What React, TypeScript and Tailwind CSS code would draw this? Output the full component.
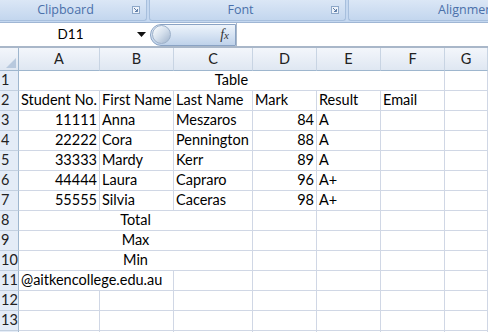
import React from 'react'

const cols = ['A', 'B', 'C', 'D', 'E', 'F', 'G']

type Cell = { t?: string; span?: number; align?: 'l' | 'r' | 'c' }

const rows: Cell[][] = [
  [{ t: 'Table', span: 6, align: 'c' }, {}],
  [{ t: 'Student No.' }, { t: 'First Name' }, { t: 'Last Name' }, { t: 'Mark' }, { t: 'Result' }, { t: 'Email' }, {}],
  [{ t: '11111', align: 'r' }, { t: 'Anna' }, { t: 'Meszaros' }, { t: '84', align: 'r' }, { t: 'A' }, {}, {}],
  [{ t: '22222', align: 'r' }, { t: 'Cora' }, { t: 'Pennington' }, { t: '88', align: 'r' }, { t: 'A' }, {}, {}],
  [{ t: '33333', align: 'r' }, { t: 'Mardy' }, { t: 'Kerr' }, { t: '89', align: 'r' }, { t: 'A' }, {}, {}],
  [{ t: '44444', align: 'r' }, { t: 'Laura' }, { t: 'Capraro' }, { t: '96', align: 'r' }, { t: 'A+' }, {}, {}],
  [{ t: '55555', align: 'r' }, { t: 'Silvia' }, { t: 'Caceras' }, { t: '98', align: 'r' }, { t: 'A+' }, {}, {}],
  [{ t: 'Total', span: 3, align: 'c' }, {}, {}, {}, {}],
  [{ t: 'Max', span: 3, align: 'c' }, {}, {}, {}, {}],
  [{ t: 'Min', span: 3, align: 'c' }, {}, {}, {}, {}],
  [{ t: '@aitkencollege.edu.au', span: 2 }, {}, {}, {}, {}, {}],
  [{}, {}, {}, {}, {}, {}, {}],
  [{}, {}, {}, {}, {}, {}, {}],
  [{}, {}, {}, {}, {}, {}, {}],
]

function Launcher() {
  return (
    <svg width="8" height="8" viewBox="0 0 8 8" className="shrink-0">
      <rect x="0.5" y="0.5" width="7" height="7" fill="#eef3fa" stroke="#8ea8c8" />
      <path d="M2 2 L5.5 5.5 M5.5 3 V5.5 H3" stroke="#5f7ea8" strokeWidth="1" fill="none" />
    </svg>
  )
}

function Group({ label, w }: { label: string; w: string }) {
  return (
    <div
      className={`${w} h-[21px] shrink-0 flex items-center rounded-b-[3px] border-x border-b border-[#a7bfdd] bg-gradient-to-b from-[#dbe7f6] to-[#c3d6ee] pr-[6px]`}
    >
      <span className="flex-1 text-center text-[12.5px] text-[#4a70aa] leading-none">{label}</span>
      <Launcher />
    </div>
  )
}

export default function App() {
  return (
    <div className="w-[488px] h-[332px] overflow-hidden bg-white font-['Lato','Liberation_Sans',sans-serif]">
      {/* ribbon group labels */}
      <div className="h-[22px] flex gap-[2px] bg-[#c5d8f0] font-['Open_Sans',sans-serif] overflow-hidden">
        <Group label="Clipboard" w="w-[149px] -ml-[2px]" />
        <Group label="Font" w="w-[197px]" />
        <div className="w-[160px] h-[21px] shrink-0 flex items-center rounded-b-[3px] border-l border-b border-[#a7bfdd] bg-gradient-to-b from-[#dbe7f6] to-[#c3d6ee] pl-[89px]">
          <span className="text-[12.5px] text-[#4a70aa] leading-none">Alignmen</span>
        </div>
      </div>

      {/* formula bar */}
      <div className="h-[26px] flex items-center border-t border-[#9fb6d4] border-b-2 border-b-[#a9b7c9] bg-white">
        <div className="w-[150px] h-full flex items-center">
          <span className="flex-1 text-center text-[13.5px] text-black pl-[4px]">D11</span>
          <svg width="9" height="5" viewBox="0 0 9 5" className="mr-[4px]">
            <path d="M0 0 H9 L4.5 5 Z" fill="#111" />
          </svg>
        </div>
        <div className="w-[86px] h-[22px] flex items-center rounded-l-full border border-[#8aa3c4] bg-gradient-to-b from-[#eef4fb] via-[#d6e3f3] to-[#bfd2ea]">
          <div className="ml-[1px] w-[19px] h-[19px] rounded-full bg-gradient-to-br from-[#ffffff] via-[#d4dfec] to-[#9fb3cc] border border-[#9db1ca]" />
          <span className="ml-auto mr-[6px] font-['Liberation_Serif',serif] italic text-[14px] text-[#333] leading-none">
            f<span className="text-[11px]">x</span>
          </span>
        </div>
        <div className="flex-1 h-full border-l border-[#a9b7c9]" />
      </div>

      {/* sheet */}
      <div className="grid grid-cols-[19px_81px_74px_79px_64px_64px_64px_1fr] text-[14.5px] text-black">
        <div className="h-[23px] border-r border-b border-[#9eb6ce] bg-gradient-to-b from-[#f3f6fb] to-[#dfe7f2] flex items-end justify-end p-[2px]">
          <svg width="10" height="10" viewBox="0 0 10 10">
            <path d="M10 0 V10 H0 Z" fill="#b8c9de" />
          </svg>
        </div>
        {cols.map((c) => (
          <div
            key={c}
            className="h-[23px] border-r border-b border-r-[#c8d4e3] border-b-[#9eb6ce] bg-gradient-to-b from-[#f3f6fb] to-[#dfe7f2] flex items-center justify-center text-[#222]"
          >
            {c}
          </div>
        ))}
        {rows.map((r, i) => (
          <React.Fragment key={i}>
            <div className="h-[20px] border-r border-b border-r-[#9eb6ce] border-b-[#c3d0e0] bg-[#e4ecf7] flex items-center text-[#222] pl-[1px] leading-none">
              {i < 13 ? i + 1 : ''}
            </div>
            {r.map((cell, j) => (
              <div
                key={j}
                style={cell.span ? { gridColumn: `span ${cell.span}` } : undefined}
                className={`h-[20px] border-r border-b border-[#d0d7e5] flex items-center px-[2px] whitespace-nowrap leading-none ${
                  cell.align === 'r' ? 'justify-end' : cell.align === 'c' ? 'justify-center' : 'justify-start'
                }`}
              >
                {cell.t}
              </div>
            ))}
          </React.Fragment>
        ))}
      </div>
    </div>
  )
}
